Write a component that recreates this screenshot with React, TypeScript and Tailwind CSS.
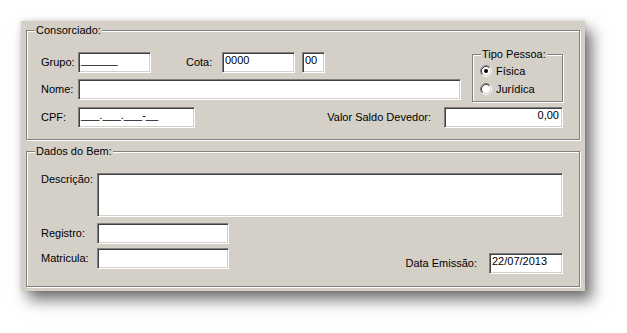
import React from 'react';

const sunken =
  'bg-white border border-t-[#808080] border-l-[#808080] border-r-white border-b-white shadow-[inset_1px_1px_0_#404040,inset_-1px_-1px_0_#d4d0c8] pl-[2px] pt-[1px] leading-[13px] text-black overflow-hidden whitespace-pre';

const GroupBox = ({ title, className, children }: { title: string; className?: string; children: React.ReactNode }) => (
  <div className={`relative border border-[#808080] shadow-[1px_1px_0_#fff,inset_1px_1px_0_#fff] ${className ?? ''}`}>
    <span className="absolute left-[8px] top-[-7px] bg-[#d4d0c8] px-[1px] leading-[13px]">{title}</span>
    {children}
  </div>
);

const Radio = ({ checked }: { checked?: boolean }) => (
  <svg width="12" height="12" viewBox="0 0 12 12" className="shrink-0">
    <circle cx="6" cy="6" r="4.5" fill="#fff" />
    <path d="M2.11 9.89 A5.5 5.5 0 0 1 9.89 2.11" fill="none" stroke="#808080" strokeWidth="1" />
    <path d="M9.89 2.11 A5.5 5.5 0 0 1 2.11 9.89" fill="none" stroke="#fff" strokeWidth="1" />
    <path d="M2.82 9.18 A4.5 4.5 0 0 1 9.18 2.82" fill="none" stroke="#404040" strokeWidth="1" />
    <path d="M9.18 2.82 A4.5 4.5 0 0 1 2.82 9.18" fill="none" stroke="#d4d0c8" strokeWidth="1" />
    {checked && <circle cx="6" cy="6" r="2" fill="#000" />}
  </svg>
);

const App = () => {
  return (
    <div
      className="min-h-[333px] bg-white pt-[21px] pl-[21px] text-[11px] leading-[13px] text-black"
      style={{ fontFamily: '"Liberation Sans", Arial, sans-serif' }}
    >
      <div className="w-[564px] h-[270px] bg-[#d4d0c8] pt-[9px] pl-[5px] shadow-[7px_9px_14px_rgba(0,0,0,0.55),0_0_5px_rgba(0,0,0,0.15)]">
        <GroupBox title="Consorciado:" className="w-[554px] h-[110px] pt-[21px] pl-[14px] pr-[16px]">
          <div className="flex items-start justify-between">
            <div className="flex flex-col gap-[6px]">
              <div className="flex items-center h-[21px]">
                <span className="w-[37px]">Grupo:</span>
                <div className={`${sunken} w-[73px] h-[21px]`}>______</div>
                <span className="ml-[35px] w-[36px]">Cota:</span>
                <div className={`${sunken} w-[73px] h-[21px]`}>0000</div>
                <div className={`${sunken} ml-[7px] w-[23px] h-[21px]`}>00</div>
              </div>
              <div className="flex items-center h-[21px]">
                <span className="w-[37px]">Nome:</span>
                <div className={`${sunken} w-[383px] h-[21px]`}></div>
              </div>
            </div>
            <GroupBox title="Tipo Pessoa:" className="mt-[2px] w-[91px] h-[48px] pt-[10px] pl-[7px]">
              <div className="flex items-center gap-[4px] h-[12px]">
                <Radio checked />
                <span>Física</span>
              </div>
              <div className="flex items-center gap-[4px] h-[12px] mt-[6px]">
                <Radio />
                <span>Jurídica</span>
              </div>
            </GroupBox>
          </div>
          <div className="flex items-center h-[21px] mt-[5px]">
            <span className="w-[37px]">CPF:</span>
            <div className={`${sunken} w-[117px] h-[21px]`}>___.___.___-__</div>
            <span className="ml-auto mr-[13px]">Valor Saldo Devedor:</span>
            <div className={`${sunken} w-[119px] h-[21px] text-right pr-[3px]`}>0,00</div>
          </div>
        </GroupBox>

        <GroupBox title="Dados do Bem:" className="mt-[11px] w-[554px] h-[136px] pt-[21px] pl-[14px] pr-[16px]">
          <div className="flex items-start">
            <span className="w-[56px]">Descrição:</span>
            <div className={`${sunken} w-[466px] h-[44px]`}></div>
          </div>
          <div className="flex items-center h-[21px] mt-[6px]">
            <span className="w-[56px]">Registro:</span>
            <div className={`${sunken} w-[132px] h-[21px]`}></div>
          </div>
          <div className="flex items-start mt-[4px]">
            <div className="flex items-center h-[21px]">
              <span className="w-[56px]">Matricula:</span>
              <div className={`${sunken} w-[132px] h-[21px]`}></div>
            </div>
            <div className="ml-auto flex items-center h-[21px] mt-[5px]">
              <span className="mr-[12px]">Data Emissão:</span>
              <div className={`${sunken} w-[74px] h-[21px]`}>22/07/2013</div>
            </div>
          </div>
        </GroupBox>
      </div>
    </div>
  );
};

export default App;
